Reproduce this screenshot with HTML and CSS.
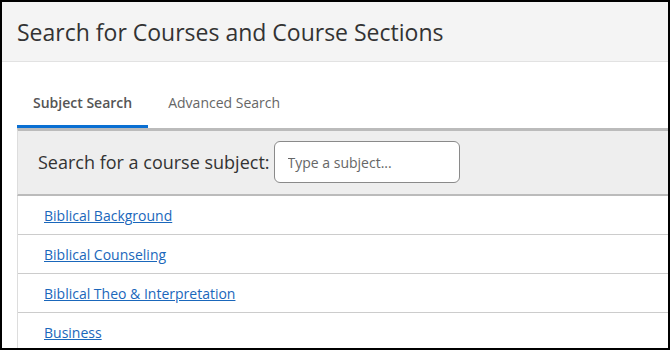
FILE: index.html
```html
<!DOCTYPE html>
<html lang="en">
<head>
  <meta charset="UTF-8">
  <title>Search for Courses and Course Sections</title>
  <link rel="stylesheet" href="styles.css">
</head>
<body>
  <div class="frame">
    <div class="page-header">
      <h1>Search for Courses and Course Sections</h1>
    </div>

    <div class="search-area">
      <div class="tabs">
        <div class="tab active">Subject Search</div>
        <div class="tab">Advanced Search</div>
      </div>

      <div class="subject-panel">
        <label for="subject-input">Search for a course subject:</label>
        <input type="text" id="subject-input" placeholder="Type a subject...">
      </div>

      <ul class="subject-list">
        <li><a href="#">Biblical Background</a></li>
        <li><a href="#">Biblical Counseling</a></li>
        <li><a href="#">Biblical Theo &amp; Interpretation</a></li>
        <li><a href="#">Business</a></li>
      </ul>
    </div>
  </div>
</body>
</html>
```

FILE: styles.css
```css
body {
  margin: 0;
  font-family: 'Open Sans', sans-serif;
  background-color: #fff;
}
.frame {
  width: 670px;
  height: 350px;
  border: 2px solid #000;
  box-sizing: border-box;
  overflow: hidden;
}
.page-header {
  background-color: #f4f4f4;
  border-bottom: 1px solid #e2e2e2;
  height: 59px;
  padding-left: 15px;
  display: flex;
  align-items: center;
}
h1 {
  margin: 0;
  font-size: 23px;
  font-weight: 400;
  color: #333;
}
.search-area {
  padding-left: 15px;
}
.tabs {
  display: flex;
  padding-top: 28px;
}
.tab {
  padding: 0 16px 10px 16px;
  font-size: 14px;
  color: #666;
  line-height: 25px;
  border-bottom: 3px solid transparent;
}
.tab + .tab {
  padding-left: 20px;
}
.tab.active {
  font-weight: 600;
  color: #555;
  border-bottom-color: #0a6fd2;
}
.subject-panel {
  background-color: #eee;
  border-top: 3px solid #bbb;
  border-bottom: 2px solid #bbb;
  border-left: 1px solid #ddd;
  padding: 10px 20px 11px;
  display: flex;
  align-items: center;
  gap: 4px;
}
.subject-panel label {
  font-size: 18px;
  color: #333;
}
.subject-panel input {
  width: 186px;
  height: 42px;
  box-sizing: border-box;
  border: 1px solid #8a8a8a;
  border-radius: 6px;
  padding: 0 13px;
  font-family: 'Open Sans', sans-serif;
  font-size: 14px;
  background-color: #fff;
}
.subject-panel input::placeholder {
  color: #666;
}
.subject-list {
  list-style: none;
  margin: 0;
  padding: 0;
  border-left: 1px solid #ddd;
}
.subject-list li {
  height: 38px;
  border-bottom: 1px solid #ccc;
  padding-left: 26px;
  display: flex;
  align-items: center;
}
.subject-list a {
  color: #1a67bb;
  font-size: 14px;
}
```
